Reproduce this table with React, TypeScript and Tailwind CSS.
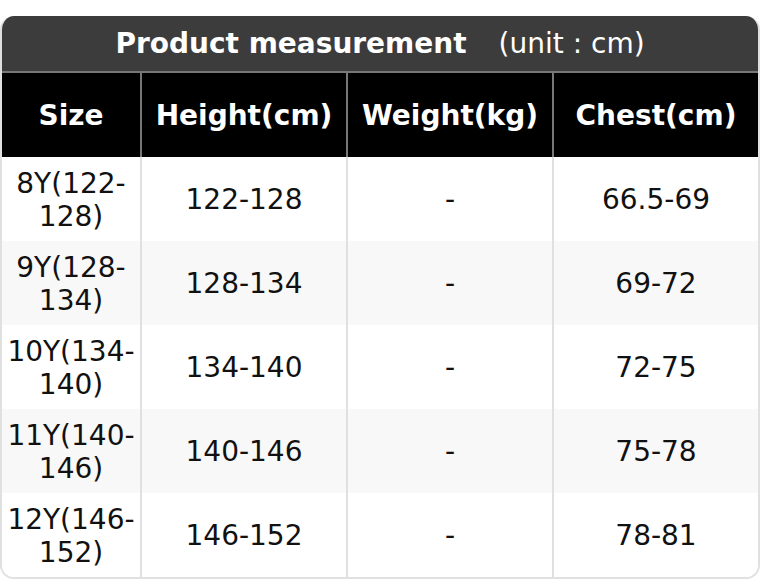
import React from "react";

const rows = [
  { size: "8Y(122-128)", height: "122-128", weight: "-", chest: "66.5-69" },
  { size: "9Y(128-134)", height: "128-134", weight: "-", chest: "69-72" },
  { size: "10Y(134-140)", height: "134-140", weight: "-", chest: "72-75" },
  { size: "11Y(140-146)", height: "140-146", weight: "-", chest: "75-78" },
  { size: "12Y(146-152)", height: "146-152", weight: "-", chest: "78-81" },
];

const headers = ["Size", "Height(cm)", "Weight(kg)", "Chest(cm)"];

const App = () => {
  return (
    <div className="w-[760px] h-[580px] overflow-hidden bg-white pt-4 font-['DejaVu_Sans',sans-serif]">
      <div className="rounded-[14px] overflow-hidden border-x-2 border-b-2 border-[#e0e0e0] bg-white">
        <div className="h-[57px] bg-[#3c3c3c] flex items-center justify-center gap-[32px] text-white text-[28px] leading-none border-b-2 border-[#777]">
          <span className="font-bold">Product measurement</span>
          <span>(unit : cm)</span>
        </div>
        <div className="grid grid-cols-[138px_206px_206px_206px]">
          {headers.map((h, i) => (
            <div
              key={h}
              className={`h-[84px] bg-black text-white font-bold text-[28px] flex items-center justify-center pt-[2px] ${
                i > 0 ? "border-l-2 border-[#777]" : ""
              }`}
            >
              {h}
            </div>
          ))}
          {rows.map((r, ri) => {
            const bg = ri % 2 === 0 ? "bg-white" : "bg-[#f8f8f8]";
            return (
              <React.Fragment key={r.size}>
                <div
                  className={`h-[84px] ${bg} text-[#111] text-[28px] leading-[33px] flex items-center justify-center text-center px-1 pt-[2px]`}
                >
                  {r.size}
                </div>
                <div
                  className={`h-[84px] ${bg} text-[#111] text-[28px] flex items-center justify-center pt-[2px] border-l-2 border-[#e0e0e0]`}
                >
                  {r.height}
                </div>
                <div
                  className={`h-[84px] ${bg} text-[#111] text-[28px] flex items-center justify-center pt-[2px] border-l-2 border-[#e0e0e0]`}
                >
                  {r.weight}
                </div>
                <div
                  className={`h-[84px] ${bg} text-[#111] text-[28px] flex items-center justify-center pt-[2px] border-l-2 border-[#e0e0e0]`}
                >
                  {r.chest}
                </div>
              </React.Fragment>
            );
          })}
        </div>
      </div>
    </div>
  );
};

export default App;
